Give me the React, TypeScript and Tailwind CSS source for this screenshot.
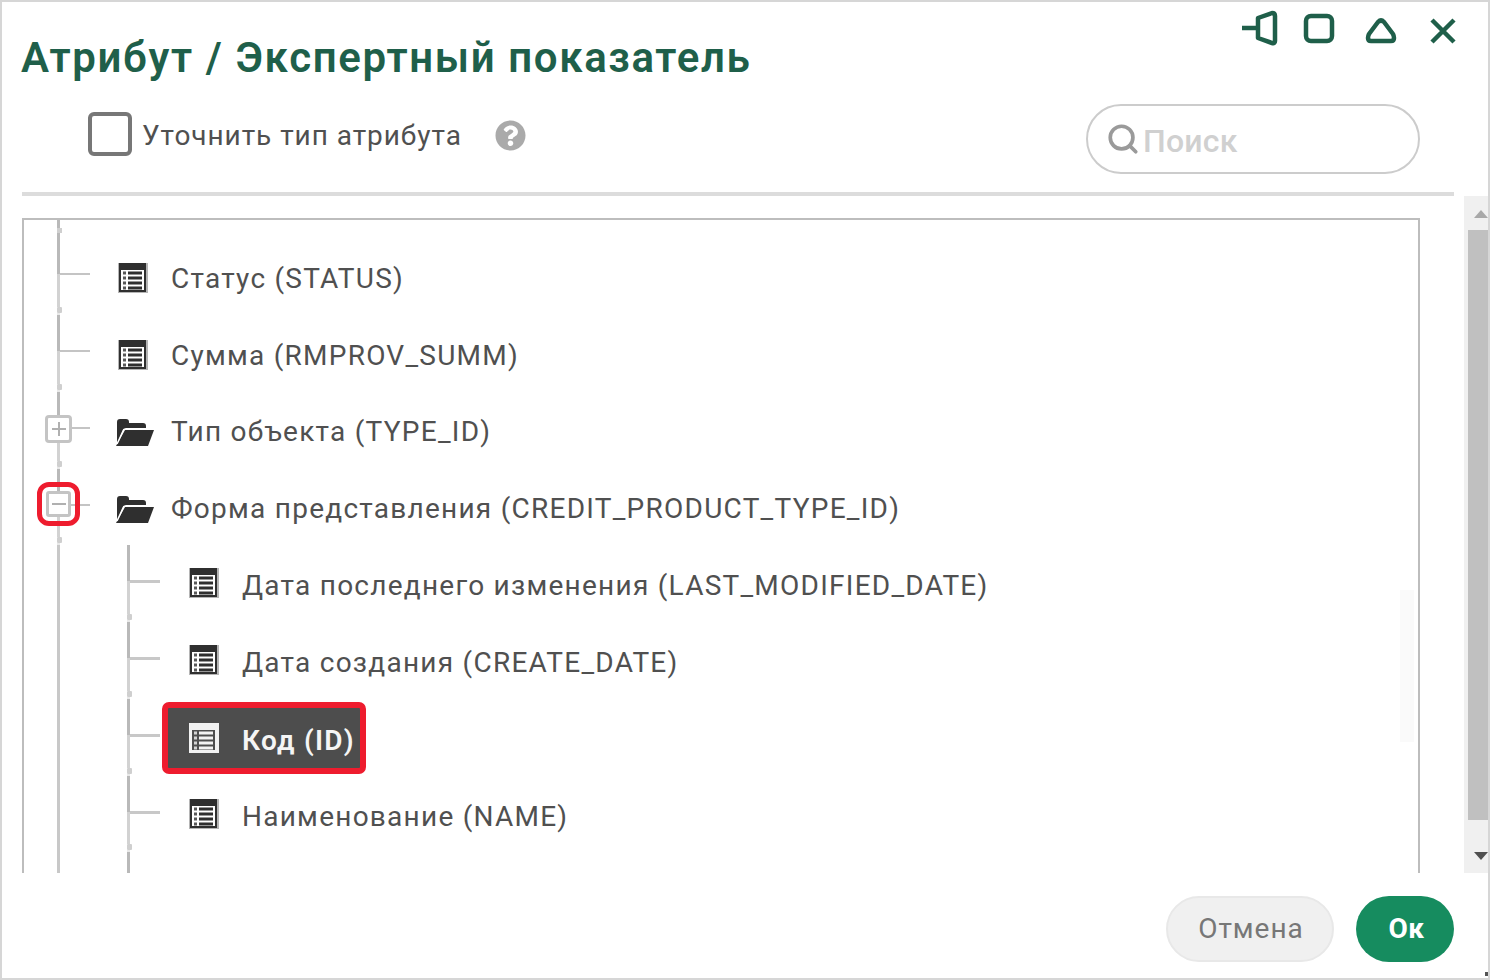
import { Search } from "lucide-react";
import { FaQuestionCircle } from "react-icons/fa";

const TableIcon = ({ inverted = false }: { inverted?: boolean }) => {
  const fg = inverted ? "#f2f2f2" : "#2f2f2f";
  const bg = inverted ? "#4d4d4d" : "#ffffff";
  return (
    <svg width="30" height="30" viewBox="0 0 30 30" className="shrink-0">
      <rect x="0" y="0" width="30" height="30" fill={inverted ? "#f2f2f2" : "#b5b5b5"} />
      <rect x="1" y="0" width="27" height="29" fill={fg} />
      <rect x="3" y="7" width="23" height="20" fill={inverted ? bg : "#ffffff"} />
      {[9, 14, 19, 24].map((y) => (
        <g key={y} fill={fg}>
          <rect x="5" y={y - 0.5} width="3" height="3" opacity="0.8" />
          <rect x="10" y={y - 0.5} width="14" height="3" />
        </g>
      ))}
    </svg>
  );
};

const FolderIcon = () => (
  <svg width="38" height="28" viewBox="0 0 38 28" className="shrink-0">
    <path d="M1 26V4q0-3 3-3h6q3 0 3 3v1h14q3 0 3 3v2H10q-2 0-3 2z" fill="#2f2f2f" />
    <path d="M9 12h29l-6 16H0z" fill="#2f2f2f" />
    <path d="M1 26l7-15" stroke="#ffffff" strokeWidth="1.5" fill="none" />
  </svg>
);

// one piece of the tree's guide line, repeats per row
const Guide = () => (
  <div className="flex flex-col w-[3px] shrink-0 self-stretch">
    <div className="h-[36px] bg-[#b9b9b9]" />
    <div className="flex-1 bg-[#d2d2d2]" />
    <div className="h-[6px] w-[5px] bg-[#cfcfcf] rounded-[1px]" />
    <div className="h-[2px] bg-[#e8e8e8]" />
  </div>
);

const Toggle = ({ open = false }: { open?: boolean }) => (
  <div
    className={
      open
        ? "absolute left-[-11px] top-[22px] w-[25px] h-[26px] rounded-[3px] border-[3px] border-[#c4c4c4] bg-white flex items-center justify-center outline-[5px] outline-offset-[4px] outline-[#ee1c2e] [outline-style:solid]"
        : "absolute left-[-12px] top-[23px] w-[27px] h-[28px] rounded-[4px] border-[3px] border-[#c4c4c4] bg-white flex items-center justify-center"
    }
  >
    <div className="relative w-[14px] h-[2px] bg-[#b0b0b0]">
      {!open && <div className="absolute left-[6px] top-[-6px] w-[2px] h-[14px] bg-[#b0b0b0]" />}
    </div>
  </div>
);

type Item = { label: string; icon: "table" | "folder"; toggle?: "plus" | "minus"; selected?: boolean };

const topItems: Item[] = [
  { label: "Статус (STATUS)", icon: "table" },
  { label: "Сумма (RMPROV_SUMM)", icon: "table" },
  { label: "Тип объекта (TYPE_ID)", icon: "folder", toggle: "plus" },
  { label: "Форма представления (CREDIT_PRODUCT_TYPE_ID)", icon: "folder", toggle: "minus" },
];

const subItems: Item[] = [
  { label: "Дата последнего изменения (LAST_MODIFIED_DATE)", icon: "table" },
  { label: "Дата создания (CREATE_DATE)", icon: "table" },
  { label: "Код (ID)", icon: "table", selected: true },
  { label: "Наименование (NAME)", icon: "table" },
];

const TopRow = ({ item }: { item: Item }) => (
  <div className="flex h-[76.75px] pl-[33px]">
    <div className="relative flex self-stretch">
      <Guide />
      {item.toggle === "plus" && <Toggle />}
      {item.toggle === "minus" && <Toggle open />}
      <div className="mt-[35px] h-[2px] w-[30px] bg-[#c4c4c4]" />
    </div>
    <div className="mt-[22px] h-[36px] flex items-center">
      {item.icon === "table" ? (
        <div className="ml-[28px] mr-[23px]">
          <TableIcon />
        </div>
      ) : (
        <div className="ml-[26px] mr-[17px]">
          <FolderIcon />
        </div>
      )}
      <span className="pt-[1px] text-[28px] tracking-[1.25px] text-[#505050] whitespace-nowrap">{item.label}</span>
    </div>
  </div>
);

const SubRow = ({ item }: { item: Item }) => (
  <div className="flex h-[76.75px] pl-[33px]">
    <div className="w-[3px] bg-[#c8c8c8] self-stretch" />
    <div className="w-[67px]" />
    <Guide />
    <div className="mt-[35px] h-[3px] w-[30px] bg-[#c8c8c8] shrink-0" />
    <div
      className={
        item.selected
          ? "ml-[2px] mt-[3px] h-[72px] flex items-center pl-[21px] pr-[5px] rounded-[7px] border-[6px] border-[#ee1c2e] bg-[#4d4d4d]"
          : "ml-[2px] mt-[2px] h-[72px] flex items-center pl-[21px] border-[6px] border-transparent"
      }
    >
      <TableIcon inverted={item.selected} />
      <span
        className={
          item.selected
            ? "ml-[23px] pt-[6px] text-[28px] tracking-[1.25px] font-semibold text-[#f5f5f5] whitespace-nowrap"
            : "ml-[23px] pt-[6px] text-[28px] tracking-[1.25px] text-[#505050] whitespace-nowrap"
        }
      >
        {item.label}
      </span>
    </div>
  </div>
);

export default function App() {
  return (
    <div className="w-[1490px] h-[980px] bg-white border-2 border-[#d6d6d6] flex flex-col overflow-hidden [font-family:Roboto,sans-serif]">
      {/* Title bar */}
      <div className="h-[102px] flex justify-between items-start shrink-0 pl-[19px] pr-[32px]">
        <h1 className="mt-[31px] text-[42px] leading-[50px] font-semibold tracking-[1.62px] text-[#1f5f4a] whitespace-nowrap">
          Атрибут / Экспертный показатель
        </h1>
        <div className="mt-[8px] flex items-start">
          <svg width="214" height="36" viewBox="0 0 214 36" fill="none" stroke="#1f5f4a" strokeWidth="4.5" strokeLinejoin="round">
            <path d="M0 18h16" />
            <path d="M16 8l14-5q3 0 3 3v25q0 3-3 2l-14-5z" />
            <rect x="64" y="6" width="26" height="25" rx="5" />
            <path d="M129 31q-3 0-3-3 0-2 1-4l9-12q3-3 6 0l9 12q1 2 1 4 0 3-3 3z" />
            <path d="M190 10l22 22M212 10l-22 22" strokeLinejoin="miter" />
          </svg>
        </div>
      </div>

      {/* Filter row */}
      <div className="h-[70px] shrink-0 flex items-start pl-[86px] pr-[68px]">
        <div className="mt-[8px] w-[44px] h-[44px] rounded-[6px] border-4 border-[#777777] shrink-0" />
        <span className="mt-[14px] ml-[10px] text-[28px] tracking-[0.95px] leading-[36px] text-[#505050] whitespace-nowrap">Уточнить тип атрибута</span>
        <FaQuestionCircle className="mt-[16px] ml-[33px] text-[#aaaaaa]" size={31} />
        <div className="ml-auto w-[334px] h-[70px] rounded-full border-2 border-[#cccccc] flex items-center pl-[18px]">
          <Search size={34} strokeWidth={2.6} className="text-[#9a9a9a] shrink-0" />
          <span className="ml-[3px] pt-[4px] text-[32px] font-medium tracking-[0.2px] text-[#d0d0d0]">Поиск</span>
        </div>
      </div>

      <div className="mt-[18px] ml-[20px] w-[1432px] h-[4px] bg-[#dcdcdc] shrink-0" />

      {/* Tree and scrollbar */}
      <div className="h-[677px] shrink-0 flex overflow-hidden">
        <div className="relative mt-[22px] ml-[20px] w-[1398px] border-x-2 border-t-2 border-[#bdbdbd] overflow-hidden">
          <div className="flex h-[18.25px] pl-[33px]">
            <div className="w-[3px] bg-[#b9b9b9] relative">
              <div className="absolute top-[8px] w-[5px] h-[5px] bg-[#cfcfcf]" />
            </div>
          </div>
          {topItems.map((item) => (
            <TopRow key={item.label} item={item} />
          ))}
          {subItems.map((item) => (
            <SubRow key={item.label} item={item} />
          ))}
          <SubRow item={{ label: "", icon: "table" }} />
          <div className="absolute right-[4px] top-[370px] w-[14px] h-[152px] bg-[#fafafa]" />
        </div>
        <div className="ml-[44px] w-[24px] bg-[#f0f0f0] flex flex-col items-end shrink-0">
          <div className="h-[34px] w-full flex items-center justify-end pt-[2px]">
            <div className="w-0 h-0 border-x-[7px] border-x-transparent border-b-[8px] border-b-[#a8a8a8]" />
          </div>
          <div className="w-[20px] h-[590px] bg-[#c0c0c0]" />
          <div className="flex-1 w-full flex items-end justify-end pb-[13px]">
            <div className="w-0 h-0 border-x-[7px] border-x-transparent border-t-[8px] border-t-[#505050]" />
          </div>
        </div>
      </div>

      {/* Footer buttons */}
      <div className="relative flex-1 flex justify-end items-start pt-[23px] pr-[34px] gap-[22px]">
        <button className="w-[168px] h-[66px] pl-[2px] rounded-full bg-[#f0f0f0] border-2 border-[#e8e8e8] text-[28px] tracking-[1px] text-[#777777]">
          Отмена
        </button>
        <button className="w-[98px] h-[66px] pl-[3px] rounded-full bg-[#168c5f] text-[28px] font-bold tracking-[0.5px] text-white">Ок</button>
        <div className="absolute right-0 bottom-[2px] w-[3px] h-[4px] bg-[#555555]" />
      </div>
    </div>
  );
}
